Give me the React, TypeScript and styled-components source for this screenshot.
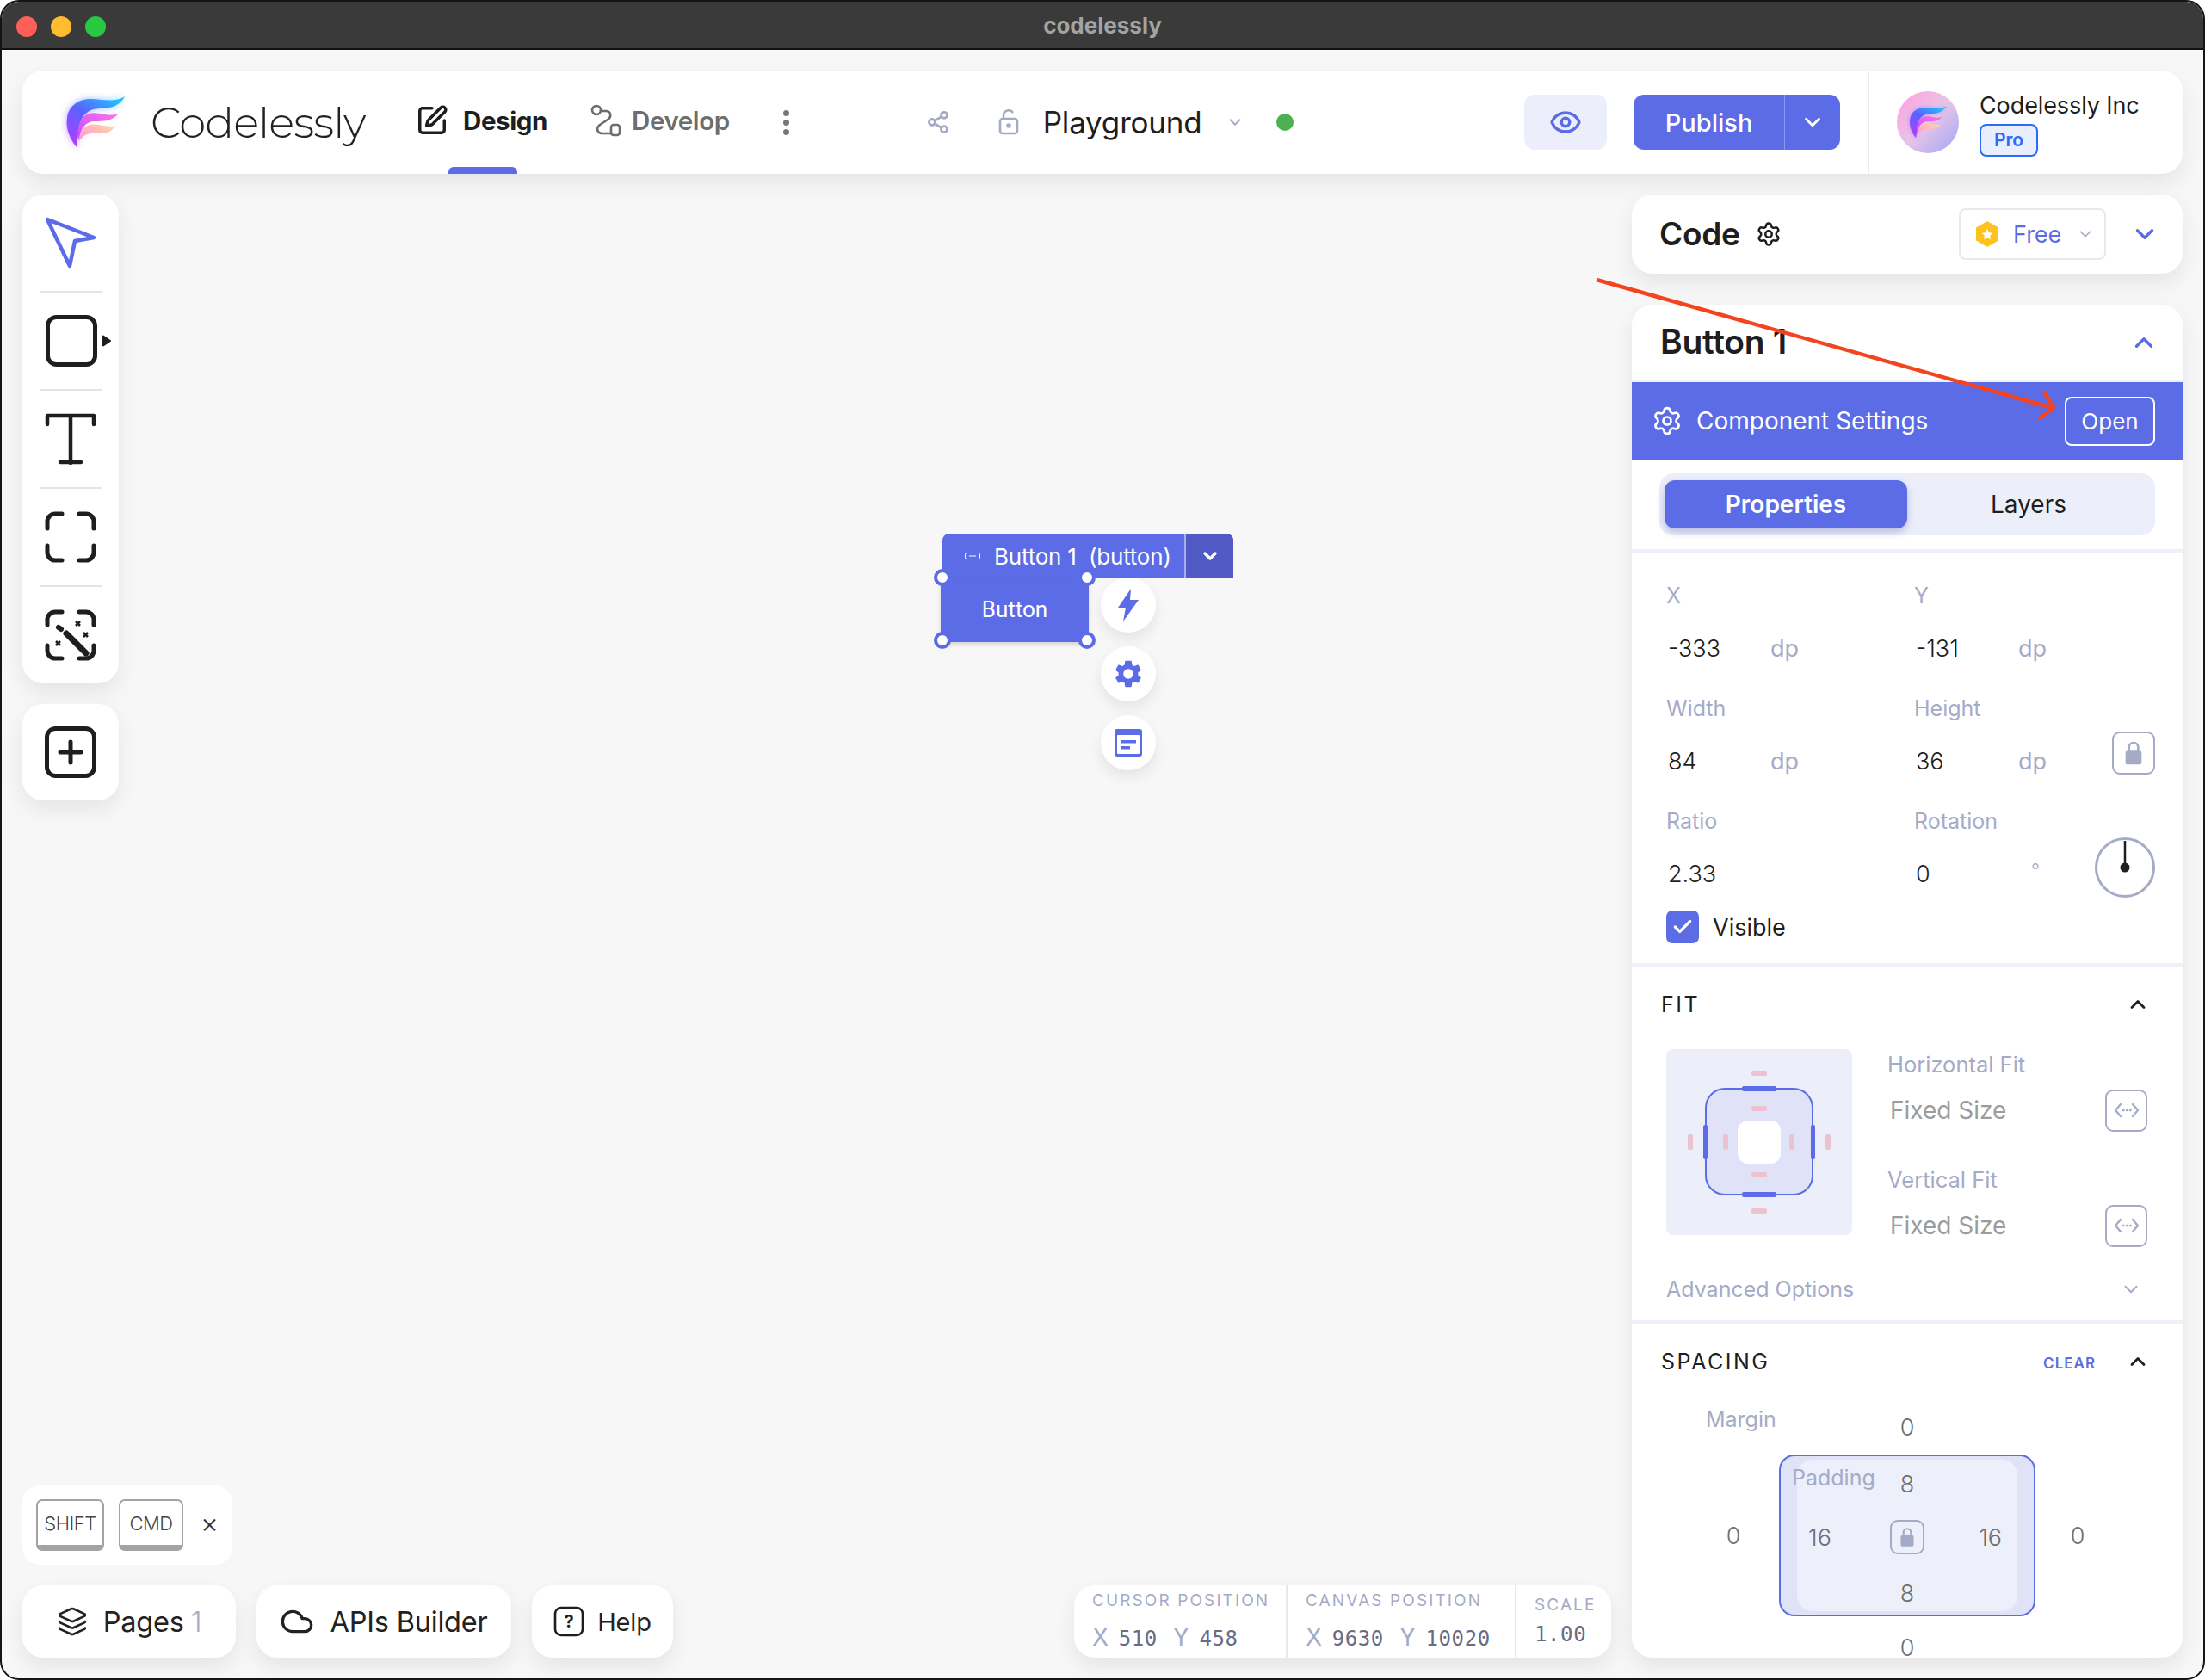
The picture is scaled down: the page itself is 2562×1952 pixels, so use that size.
import React from "react";
import styled, { createGlobalStyle } from "styled-components";
import { SquarePen, Share2, Eye, ChevronDown, ChevronUp, Settings, Layers, Cloud, Check } from "lucide-react";
import { MdSettings } from "react-icons/md";

const PRIMARY = "#5c6ce6";
const LABEL = "#a5abc7";
const INK = "#1e1e1e";
const SANS = `"Inter", "Noto Sans", sans-serif`;

const Global = createGlobalStyle`
  html, body { margin: 0; padding: 0; background: #fff; }
  body { font-family: ${SANS}; color: ${INK}; }
  * { box-sizing: border-box; }
`;

const Window = styled.div`
  position: relative;
  width: 2562px;
  height: 1952px;
  display: flex;
  flex-direction: column;
  border: 2px solid #151515;
  border-radius: 22px;
  overflow: hidden;
  background: #f7f7f7;
`;
const TitleBar = styled.div`
  height: 56px;
  flex: none;
  background: #3a3a3a;
  display: flex;
  align-items: center;
  justify-content: center;
  position: relative;
  border-bottom: 2px solid #111;
`;
const Lights = styled.div`
  position: absolute;
  left: 17px;
  top: 17px;
  display: flex;
  gap: 16px;
`;
const Light = styled.span<{ $c: string }>`
  width: 24px;
  height: 24px;
  border-radius: 50%;
  background: ${(p) => p.$c};
`;
const TitleText = styled.span`
  font-size: 26px;
  font-weight: 700;
  color: #a3a3a3;
`;
const Body = styled.div`
  flex: 1;
  min-height: 0;
  display: flex;
  flex-direction: column;
  gap: 24px;
  padding: 24px 24px 24px;
`;
const Card = styled.div`
  background: #fff;
  border-radius: 24px;
  box-shadow: 0 10px 24px rgba(0, 0, 0, 0.08);
`;
const Header = styled(Card)`
  height: 120px;
  flex: none;
  display: flex;
  align-items: center;
  position: relative;
`;
const LogoWrap = styled.div`
  margin-left: 50px;
  width: 70px;
  height: 62px;
  flex: none;
`;
const Brand = styled.div`
  margin-left: 29px;
  width: 308px;
  font-family: "Montserrat", "Inter", sans-serif;
  font-size: 50px;
  font-weight: 300;
  letter-spacing: -0.9px;
  color: #222;
`;
const NavItem = styled.div<{ $active?: boolean; $gap?: number; $iconGap: number }>`
  display: flex;
  align-items: center;
  gap: ${(p) => p.$iconGap}px;
  font-size: 29.5px;
  font-weight: ${(p) => (p.$active ? 700 : 600)};
  color: ${(p) => (p.$active ? "#1e1e1e" : "#6d6d6d")};
  margin-top: -4px;
  margin-left: ${(p) => p.$gap ?? 0}px;
  letter-spacing: -0.4px;
`;
const Underline = styled.div`
  position: absolute;
  left: 495px;
  bottom: 0;
  width: 80px;
  height: 8px;
  border-radius: 6px 6px 0 0;
  background: ${PRIMARY};
`;
const Dots = styled.div`
  display: flex;
  flex-direction: column;
  gap: 4px;
  margin-left: 62px;
  span {
    width: 7px;
    height: 7px;
    border-radius: 50%;
    background: #777;
  }
`;
const ProjectGroup = styled.div`
  display: flex;
  align-items: center;
  margin-left: 159px;
`;
const ProjectName = styled.div`
  font-size: 35px;
  font-weight: 400;
  margin-left: 28px;
  width: 182px;
  letter-spacing: -0.2px;
  color: #1e1e1e;
`;
const GreenDot = styled.span`
  width: 20px;
  height: 20px;
  background: #4caf50;
  border-radius: 50%;
  margin-left: 37px;
`;
const Actions = styled.div`
  margin-left: auto;
  display: flex;
  align-items: center;
  height: 100%;
`;
const EyeButton = styled.div`
  width: 96px;
  height: 64px;
  border-radius: 12px;
  background: #eceffb;
  display: flex;
  align-items: center;
  justify-content: center;
  color: ${PRIMARY};
`;
const PublishButton = styled.div`
  margin-left: 31px;
  width: 240px;
  height: 64px;
  border-radius: 12px;
  background: ${PRIMARY};
  color: #fff;
  display: flex;
  align-items: center;
  font-size: 29px;
  font-weight: 500;
`;
const PublishLabel = styled.div`
  width: 176px;
  text-align: center;
  border-right: 1px solid #8e99ee;
  height: 100%;
  line-height: 66px;
`;
const PublishCaret = styled.div`
  flex: 1;
  display: flex;
  justify-content: center;
`;
const UserBox = styled.div`
  margin-left: 32px;
  height: 100%;
  width: 366px;
  border-left: 2px solid #eeeeee;
  display: flex;
  align-items: center;
  padding-left: 32px;
  gap: 24px;
`;
const Avatar = styled.div`
  width: 72px;
  height: 72px;
  border-radius: 50%;
  background: linear-gradient(135deg, #ff9fe0 0%, #e8c4e8 50%, #9fa6f5 100%);
  display: flex;
  align-items: center;
  justify-content: center;
`;
const UserText = styled.div`
  display: flex;
  flex-direction: column;
  gap: 6px;
  margin-top: 5px;
`;
const UserName = styled.div`
  font-size: 27px;
  line-height: 30px;
  letter-spacing: -0.1px;
`;
const ProBadge = styled.div`
  width: 68px;
  height: 38px;
  border: 2px solid #2a6cf6;
  border-radius: 8px;
  background: #e8eefe;
  color: #2a6cf6;
  font-size: 21px;
  font-weight: 600;
  text-align: center;
  line-height: 34px;
`;

const Main = styled.div`
  flex: 1;
  min-height: 0;
  display: flex;
  gap: 24px;
`;
const CanvasArea = styled.div`
  flex: 1;
  position: relative;
  display: flex;
  flex-direction: column;
  justify-content: space-between;
`;
const ToolStack = styled.div`
  display: flex;
  flex-direction: column;
  gap: 24px;
  width: 112px;
`;
const ToolCard = styled(Card)`
  display: flex;
  flex-direction: column;
  align-items: center;
`;
const ToolItem = styled.div`
  height: 112px;
  width: 100%;
  display: flex;
  align-items: center;
  justify-content: center;
`;
const ToolSep = styled.div`
  width: 72px;
  height: 2px;
  background: #e4e4e4;
`;

const Node = styled.div`
  position: absolute;
  left: 1067px;
  top: 394px;
  width: 340px;
`;
const NodeBar = styled.div`
  margin-left: 2px;
  width: 338px;
  height: 52px;
  border-radius: 8px 8px 0 0;
  background: ${PRIMARY};
  color: #fff;
  display: flex;
  align-items: center;
  overflow: hidden;
`;
const NodeTitle = styled.div`
  flex: 1;
  display: flex;
  align-items: center;
  padding-left: 26px;
  font-size: 26px;
  gap: 16px;
  white-space: nowrap;
  letter-spacing: -0.2px;
`;
const NodeCaret = styled.div`
  width: 57px;
  height: 100%;
  background: #5059c4;
  border-left: 2px solid #a9aee8;
  display: flex;
  align-items: center;
  justify-content: center;
`;
const NodeButton = styled.div`
  margin-top: -2px;
  width: 172px;
  height: 76px;
  background: ${PRIMARY};
  color: #fff;
  font-size: 26px;
  font-weight: 400;
  font-family: "Roboto", sans-serif;
  display: flex;
  align-items: center;
  justify-content: center;
  box-shadow: 0 3px 5px rgba(0, 0, 0, 0.15);
`;
const Handle = styled.span<{ $x: number; $y: number }>`
  position: absolute;
  left: ${(p) => p.$x - 10}px;
  top: ${(p) => p.$y - 10}px;
  width: 20px;
  height: 20px;
  border-radius: 50%;
  background: #fff;
  border: 4px solid ${PRIMARY};
`;
const FloatColumn = styled.div`
  position: absolute;
  left: 186px;
  top: 51px;
  display: flex;
  flex-direction: column;
  gap: 16px;
`;
const FloatButton = styled.div`
  width: 64px;
  height: 64px;
  border-radius: 50%;
  background: #fff;
  display: flex;
  align-items: center;
  justify-content: center;
  box-shadow: 0 8px 16px rgba(0, 0, 0, 0.08);
  color: ${PRIMARY};
`;

const BottomRow = styled.div`
  display: flex;
  justify-content: space-between;
  align-items: flex-end;
`;
const BottomLeft = styled.div`
  display: flex;
  flex-direction: column;
  gap: 24px;
  align-items: flex-start;
`;
const ShortcutCard = styled(Card)`
  width: 244px;
  height: 92px;
  border-radius: 20px;
  display: flex;
  align-items: center;
  padding-left: 16px;
  gap: 17px;
  box-shadow: none;
`;
const Key = styled.div<{ $w: number }>`
  width: ${(p) => p.$w}px;
  height: 60px;
  border: 2px solid #a3a3a3;
  border-bottom: 7px solid #a3a3a3;
  border-radius: 7px;
  font-size: 22px;
  font-weight: 300;
  color: #444;
  display: flex;
  align-items: center;
  justify-content: center;
  letter-spacing: -0.5px;
`;
const CloseX = styled.span`
  font-size: 32px;
  color: #333;
  margin: -5px 0 0 3px;
  font-weight: 300;
`;
const PillRow = styled.div`
  display: flex;
  gap: 24px;
`;
const Pill = styled(Card)<{ $w: number }>`
  width: ${(p) => p.$w}px;
  height: 84px;
  display: flex;
  align-items: center;
  justify-content: center;
  gap: 18px;
  font-size: 32.5px;
  letter-spacing: -0.2px;
  color: #222;
`;
const PillCount = styled.span`
  color: ${LABEL};
  font-weight: 300;
  margin-left: 8px;
`;
const HelpText = styled.span`
  font-size: 29px;
  margin-left: -3px;
`;
const StatusCard = styled(Card)`
  display: flex;
  height: 84px;
`;
const StatusCell = styled.div<{ $w: number; $last?: boolean }>`
  width: ${(p) => p.$w}px;
  padding: 7px 0 0 21px;
  border-right: ${(p) => (p.$last ? "none" : "2px solid #e8e8e8")};
  display: flex;
  flex-direction: column;
`;
const StatusTitle = styled.div<{ $low?: boolean }>`
  font-size: 19px;
  line-height: 22px;
  letter-spacing: 2.1px;
  color: ${LABEL};
  white-space: nowrap;
  margin-top: ${(p) => (p.$low ? "5px" : "0")};
`;
const StatusValues = styled.div<{ $low?: boolean }>`
  margin-top: ${(p) => (p.$low ? "9px" : "14px")};
  display: flex;
  align-items: baseline;
  font-family: "DejaVu Sans Mono", monospace;
  font-size: 24px;
  letter-spacing: 0.6px;
  color: #686d85;
  white-space: nowrap;
`;
const Axis = styled.span`
  font-family: ${SANS};
  font-size: 28px;
  color: ${LABEL};
  margin: 0 11px 0 0;
`;
const AxisGap = styled.span`
  width: 18px;
`;

const RightCol = styled.div`
  width: 640px;
  flex: none;
  display: flex;
  flex-direction: column;
  gap: 36px;
`;
const CodeCard = styled(Card)`
  height: 92px;
  flex: none;
  display: flex;
  align-items: center;
  padding: 0 27px 0 32px;
`;
const CodeTitle = styled.div`
  font-size: 37px;
  font-weight: 600;
  margin: -2px 18px 0 0;
  letter-spacing: -0.3px;
`;
const FreeSelect = styled.div`
  margin-left: auto;
  width: 171px;
  height: 60px;
  border: 2px solid #e8e9f0;
  border-radius: 8px;
  display: flex;
  align-items: center;
  padding-left: 18px;
  gap: 17px;
  color: ${PRIMARY};
  font-size: 27px;
`;
const FreeCaret = styled.div`
  margin-left: 28px;
  display: flex;
  color: ${PRIMARY};
`;
const Panel = styled(Card)`
  flex: 1;
  min-height: 0;
  overflow: hidden;
  display: flex;
  flex-direction: column;
`;
const PanelHead = styled.div`
  height: 90px;
  flex: none;
  display: flex;
  align-items: center;
  justify-content: space-between;
  padding: 0 28px 0 33px;
  border-bottom: 2px solid #eef0fa;
  color: ${PRIMARY};
`;
const PanelTitle = styled.div`
  font-size: 39px;
  font-weight: 600;
  color: ${INK};
  letter-spacing: -0.3px;
  margin-top: -3px;
`;
const SettingsBand = styled.div`
  height: 90px;
  flex: none;
  background: ${PRIMARY};
  color: #fff;
  display: flex;
  align-items: center;
  padding: 0 32px 0 23px;
  font-size: 28px;
  gap: 16px;
`;
const OpenButton = styled.div`
  margin-left: auto;
  width: 105px;
  height: 57px;
  border: 2px solid #fff;
  border-radius: 8px;
  font-size: 26px;
  display: flex;
  align-items: center;
  justify-content: center;
`;
const TabsWrap = styled.div`
  flex: none;
  padding: 16px 32px;
  border-bottom: 4px solid #eef0fa;
`;
const Tabs = styled.div`
  height: 72px;
  border-radius: 16px;
  background: #eceffa;
  padding: 8px 6px;
  display: flex;
`;
const Tab = styled.div<{ $active?: boolean }>`
  flex: 1;
  display: flex;
  align-items: center;
  justify-content: center;
  font-size: 28px;
  font-weight: ${(p) => (p.$active ? 600 : 400)};
  border-radius: 12px;
  color: ${(p) => (p.$active ? "#fff" : INK)};
  background: ${(p) => (p.$active ? PRIMARY : "transparent")};
  box-shadow: ${(p) => (p.$active ? "0 4px 10px rgba(60,70,160,.3)" : "none")};
`;
const Props = styled.div`
  flex: none;
  padding: 35px 32px 23px 40px;
  border-bottom: 4px solid #eef0fa;
`;
const PropGrid = styled.div`
  display: grid;
  grid-template-columns: 288px 1fr;
  row-gap: 37px;
`;
const Field = styled.div`
  display: flex;
  align-items: flex-end;
  justify-content: space-between;
`;
const FieldLabel = styled.div`
  font-size: 25px;
  line-height: 30px;
  color: ${LABEL};
`;
const FieldValueRow = styled.div`
  margin-top: 28px;
  display: flex;
  align-items: center;
  height: 36px;
  font-size: 27px;
  font-weight: 300;
  color: ${INK};
  padding-left: 2px;
`;
const FieldValue = styled.span`
  width: 119px;
`;
const Unit = styled.span`
  color: ${LABEL};
  font-size: 27px;
  font-weight: 400;
`;
const Degree = styled.span`
  color: ${LABEL};
  font-size: 22px;
  margin-top: -8px;
  margin-left: 15px;
`;
const IconBox = styled.div<{ $w: number; $h: number }>`
  width: ${(p) => p.$w}px;
  height: ${(p) => p.$h}px;
  flex: none;
  border: 2px solid ${LABEL};
  border-radius: 9px;
  display: flex;
  align-items: center;
  justify-content: center;
  color: ${LABEL};
`;
const LockAdorn = styled(IconBox)`
  margin-bottom: 2px;
`;
const Dial = styled.div`
  margin-bottom: -10px;
  display: flex;
`;
const VisibleRow = styled.div`
  margin-top: 25px;
  display: flex;
  align-items: center;
  gap: 16px;
  font-size: 27px;
`;
const CheckBox = styled.div`
  width: 38px;
  height: 38px;
  border-radius: 7px;
  background: ${PRIMARY};
  color: #fff;
  display: flex;
  align-items: center;
  justify-content: center;
`;
const Section = styled.div`
  flex: none;
  padding: 29px 33px 0 34px;
`;
const FitSection = styled(Section)`
  height: 415px;
  border-bottom: 4px solid #eef0fa;
`;
const SectionHead = styled.div`
  height: 30px;
  display: flex;
  align-items: center;
  font-size: 25px;
  letter-spacing: 2.5px;
  color: ${INK};
`;
const SectionCaret = styled.div<{ $auto?: boolean }>`
  margin-left: ${(p) => (p.$auto ? "auto" : "35px")};
  display: flex;
  color: ${INK};
  margin-right: 5px;
`;
const ClearLink = styled.span`
  margin-left: auto;
  font-size: 17px;
  font-weight: 600;
  letter-spacing: 1px;
  color: ${PRIMARY};
  margin-top: 3px;
`;
const FitRow = styled.div`
  margin: 37px 0 0 6px;
  display: flex;
`;
const FitDiagram = styled.div`
  width: 216px;
  height: 216px;
  flex: none;
  border-radius: 8px;
  background: #eceffa;
`;
const FitOptions = styled.div`
  margin-left: 41px;
  flex: 1;
  padding-top: 4px;
`;
const FitLabel = styled.div`
  font-size: 25.5px;
  line-height: 28px;
  color: ${LABEL};
`;
const FitOption = styled.div`
  height: 50px;
  margin: 14px 0 42px 3px;
  display: flex;
  align-items: center;
  justify-content: space-between;
  font-size: 28px;
  color: #9c9c9c;
  padding-right: 8px;
  &:last-child {
    margin-bottom: 0;
  }
`;
const AdvancedRow = styled.div`
  margin: 34px 0 0 6px;
  display: flex;
  align-items: center;
  justify-content: space-between;
  font-size: 25px;
  line-height: 30px;
  color: ${LABEL};
  padding-right: 14px;
`;
const SpacingGrid = styled.div`
  margin: 43px -33px 0 -34px;
  display: grid;
  grid-template-columns: 128px 298px 128px;
  grid-template-rows: 36px 188px 36px;
  row-gap: 14px;
  justify-content: center;
  font-size: 27px;
  font-weight: 300;
  color: #6f6f6f;
`;
const MarginLabel = styled.div`
  font-size: 25px;
  font-weight: 400;
  color: ${LABEL};
  padding-left: 43px;
  line-height: 18px;
`;
const SpaceCell = styled.div<{ $pl?: number; $pr?: number; $pt?: number }>`
  display: flex;
  align-items: center;
  justify-content: center;
  padding-left: ${(p) => p.$pl ?? 0}px;
  padding-right: ${(p) => p.$pr ?? 0}px;
  padding-top: ${(p) => p.$pt ?? 0}px;
`;
const EdgeStart = styled(SpaceCell)`
  justify-content: flex-start;
`;
const EdgeEnd = styled(SpaceCell)`
  justify-content: flex-end;
`;
const PaddingOuter = styled.div`
  border: 2px solid ${PRIMARY};
  border-radius: 18px;
  background: #e0e3f8;
  padding: 4px 19px;
  position: relative;
`;
const PaddingInner = styled.div`
  height: 100%;
  border-radius: 18px;
  background: #edf0fb;
  display: grid;
  grid-template-columns: 1fr 40px 1fr;
  grid-template-rows: 56px 68px 1fr;
`;
const PaddingLabel = styled.div`
  position: absolute;
  left: 13px;
  top: 10px;
  font-size: 25px;
  font-weight: 400;
  color: ${LABEL};
`;
const Arrow = styled.svg`
  position: absolute;
  left: 0;
  top: 0;
  pointer-events: none;
`;

const Logo = ({ id, w, h }: { id: string; w: number; h: number }) => (
  <svg width={w} height={h} viewBox="0 0 70 62" overflow="visible">
    <defs>
      <linearGradient id={`${id}a`} x1="0.8" y1="0" x2="0.1" y2="1">
        <stop offset="0" stopColor="#22c1ff" />
        <stop offset="0.45" stopColor="#5b62ff" />
        <stop offset="1" stopColor="#b23cff" />
      </linearGradient>
      <linearGradient id={`${id}b`} x1="1" y1="0" x2="0" y2="1">
        <stop offset="0" stopColor="#ff74e6" />
        <stop offset="1" stopColor="#c44dff" />
      </linearGradient>
      <linearGradient id={`${id}c`} x1="1" y1="0" x2="0" y2="1">
        <stop offset="0" stopColor="#ffdca0" />
        <stop offset="1" stopColor="#ff8fd8" />
      </linearGradient>
      <filter id={`${id}f`} x="-30%" y="-30%" width="160%" height="160%">
        <feGaussianBlur stdDeviation="4" />
      </filter>
    </defs>
    <path d="M69 1C64 12 52 15 40 15C26 15 18 24 16 36C15 46 14 52 13 60C5 50 0 38 2 26C4 10 18 3 32 4C46 5 58 8 69 1Z" fill={`url(#${id}a)`} filter={`url(#${id}f)`} opacity="0.55" />
    <path d="M69 1C64 12 52 15 40 15C26 15 18 24 16 36C15 46 14 52 13 60C5 50 0 38 2 26C4 10 18 3 32 4C46 5 58 8 69 1Z" fill={`url(#${id}a)`} />
    <path d="M62 20C56 30 44 30 34 30C24 30 17 38 16 52C13 44 14 34 20 26C26 18 38 20 46 22C52 23 58 23 62 20Z" fill={`url(#${id}b)`} />
    <path d="M58 35C52 46 42 44 32 44C26 44 20 46 16 53C16 44 20 36 28 34C38 32 50 38 58 35Z" fill={`url(#${id}c)`} />
  </svg>
);

const LockGlyph = ({ s }: { s: number }) => (
  <svg width={s} height={s} viewBox="0 0 24 24" fill="currentColor">
    <path d="M5 12a2 2 0 0 1 2-2h10a2 2 0 0 1 2 2v8a2 2 0 0 1-2 2H7a2 2 0 0 1-2-2z" />
    <path d="M8 11V7a4 4 0 0 1 8 0v4" fill="none" stroke="currentColor" strokeWidth="2" />
  </svg>
);

const DevelopIcon = () => (
  <svg width="36" height="38" viewBox="0 0 36 38" fill="none" stroke="#6d6d6d" strokeWidth="2.6" strokeLinecap="round">
    <circle cx="7" cy="7" r="5" />
    <rect x="24" y="24" width="10" height="12" rx="3" />
    <path d="M12 8H18C24 8 25 15 20 18L11 24C6 28 8 34 14 34H24" />
  </svg>
);

const FitArrows = () => (
  <svg width="30" height="18" viewBox="0 0 30 18" fill="none" stroke={LABEL} strokeWidth="2.4" strokeLinecap="round" strokeLinejoin="round">
    <path d="M8 2L2 9l6 7M22 2l6 7-6 7" />
    <path d="M11 9h.6M15 9h.6M19 9h.6" />
  </svg>
);

const Cursor = () => (
  <svg width="60" height="60" viewBox="0 0 60 60" fill="none" stroke={PRIMARY} strokeWidth="4.5" strokeLinejoin="round" strokeLinecap="round">
    <path d="M3 3L57 24L35 28L29 57Z" />
  </svg>
);
const RectTool = () => (
  <svg width="76" height="60" viewBox="0 0 76 60" fill="none" style={{ marginLeft: 18 }}>
    <rect x="2.5" y="2.5" width="55" height="55" rx="10" stroke="#1e1e1e" strokeWidth="5" />
    <path d="M67 24.5l8 5.5-8 5.5z" fill="#1e1e1e" stroke="#1e1e1e" strokeWidth="2" strokeLinejoin="round" />
  </svg>
);
const TextTool = () => (
  <svg width="60" height="60" viewBox="0 0 60 60" fill="none" stroke="#1e1e1e" strokeWidth="4.5" strokeLinecap="round" strokeLinejoin="round">
    <path d="M3 13V3h54v10M30 3v55M18 57h24" />
  </svg>
);
const FrameTool = () => (
  <svg width="60" height="60" viewBox="0 0 60 60" fill="none" stroke="#1e1e1e" strokeWidth="5" strokeLinecap="round">
    <path d="M20 3H12a9 9 0 0 0-9 9v8M40 3h8a9 9 0 0 1 9 9v8M20 57H12a9 9 0 0 1-9-9v-8M40 57h8a9 9 0 0 0 9-9v-8" />
  </svg>
);
const WandTool = () => (
  <svg width="60" height="60" viewBox="0 0 60 60" fill="none" stroke="#1e1e1e" strokeWidth="5" strokeLinecap="round">
    <path d="M20 3H12a9 9 0 0 0-9 9v6M40 3h8a9 9 0 0 1 9 9v6M20 57H12a9 9 0 0 1-9-9v-6M40 57h8a9 9 0 0 0 9-9v-6" />
    <path d="M16 21l3 2" strokeWidth="6" />
    <path d="M25 28L48 51" strokeWidth="7" />
    <path d="M36 14l5 5M41 14l-5 5M45 27l5 5M50 27l-5 5M13 37l5 5M18 37l-5 5" strokeWidth="2.6" strokeLinecap="butt" />
  </svg>
);
const AddTool = () => (
  <svg width="60" height="60" viewBox="0 0 60 60" fill="none" stroke="#1e1e1e" strokeWidth="5" strokeLinecap="round">
    <rect x="2.5" y="2.5" width="55" height="55" rx="10" />
    <path d="M30 18v24M18 30h24" />
  </svg>
);

const FitPicture = () => {
  const pink = "#ecc2cf";
  const ticks: [number, number, number, number][] = [
    [99, 25, 18, 6], [99, 66, 18, 6], [99, 143, 18, 6], [99, 185, 18, 6],
    [25, 99, 6, 18], [66, 99, 6, 18], [143, 99, 6, 18], [185, 99, 6, 18],
  ];
  return (
    <svg width="216" height="216" viewBox="0 0 216 216">
      <rect x="46" y="46" width="124" height="123" rx="22" fill="#e0e3f7" stroke={PRIMARY} strokeWidth="2" />
      <rect x="83" y="83" width="50" height="50" rx="12" fill="#fff" />
      {ticks.map(([x, y, w, h], i) => (
        <rect key={i} x={x} y={y} width={w} height={h} rx="2" fill={pink} />
      ))}
      <rect x="88" y="43" width="40" height="6" rx="2" fill={PRIMARY} />
      <rect x="88" y="166" width="40" height="6" rx="2" fill={PRIMARY} />
      <rect x="43" y="88" width="5" height="40" rx="2" fill={PRIMARY} />
      <rect x="168" y="88" width="5" height="40" rx="2" fill={PRIMARY} />
    </svg>
  );
};

export default function App() {
  return (
    <>
      <Global />
      <Window>
        <TitleBar>
          <Lights>
            <Light $c="#ff5f57" />
            <Light $c="#febc2e" />
            <Light $c="#28c840" />
          </Lights>
          <TitleText>codelessly</TitleText>
        </TitleBar>
        <Body>
          <Header>
            <LogoWrap>
              <Logo id="lg" w={70} h={62} />
            </LogoWrap>
            <Brand>Codelessly</Brand>
            <NavItem $active $iconGap={17}>
              <SquarePen size={38} strokeWidth={2.2} color="#1e1e1e" />
              Design
            </NavItem>
            <NavItem $gap={50} $iconGap={12}>
              <DevelopIcon />
              Develop
            </NavItem>
            <Dots>
              <span />
              <span />
              <span />
            </Dots>
            <Underline />
            <ProjectGroup>
              <Share2 size={28} color={LABEL} strokeWidth={2.4} />
              <svg width="24" height="30" viewBox="0 0 24 30" fill="none" stroke={LABEL} strokeWidth="2.6" style={{ marginLeft: 56 }}>
                <rect x="2" y="11" width="20" height="17" rx="3" />
                <path d="M6 11V7a6 6 0 0 1 11-3" />
                <circle cx="12" cy="19" r="1.5" fill={LABEL} />
              </svg>
              <ProjectName>Playground</ProjectName>
              <ChevronDown size={22} color={LABEL} style={{ marginLeft: 30 }} />
              <GreenDot />
            </ProjectGroup>
            <Actions>
              <EyeButton>
                <Eye size={38} strokeWidth={2.2} />
              </EyeButton>
              <PublishButton>
                <PublishLabel>Publish</PublishLabel>
                <PublishCaret>
                  <ChevronDown size={30} strokeWidth={2.2} />
                </PublishCaret>
              </PublishButton>
              <UserBox>
                <Avatar>
                  <Logo id="av" w={44} h={42} />
                </Avatar>
                <UserText>
                  <UserName>Codelessly Inc</UserName>
                  <ProBadge>Pro</ProBadge>
                </UserText>
              </UserBox>
            </Actions>
          </Header>
          <Main>
            <CanvasArea>
              <ToolStack>
                <ToolCard>
                  <ToolItem><Cursor /></ToolItem>
                  <ToolSep />
                  <ToolItem><RectTool /></ToolItem>
                  <ToolSep />
                  <ToolItem><TextTool /></ToolItem>
                  <ToolSep />
                  <ToolItem><FrameTool /></ToolItem>
                  <ToolSep />
                  <ToolItem><WandTool /></ToolItem>
                </ToolCard>
                <ToolCard>
                  <ToolItem><AddTool /></ToolItem>
                </ToolCard>
              </ToolStack>

              <Node>
                <NodeBar>
                  <NodeTitle>
                    <svg width="18" height="8" viewBox="0 0 18 8" fill="none" stroke="#fff" strokeWidth="1">
                      <rect x="0.5" y="0.5" width="17" height="7" rx="2" />
                      <path d="M5 4h8" />
                    </svg>
                    <span>Button 1&nbsp; (button)</span>
                  </NodeTitle>
                  <NodeCaret>
                    <ChevronDown size={24} strokeWidth={3.4} color="#fff" />
                  </NodeCaret>
                </NodeBar>
                <NodeButton>Button</NodeButton>
                <Handle $x={2} $y={51} />
                <Handle $x={170} $y={51} />
                <Handle $x={2} $y={124} />
                <Handle $x={170} $y={124} />
                <FloatColumn>
                  <FloatButton>
                    <svg width="26" height="38" viewBox="0 0 26 38" fill={PRIMARY}>
                      <path d="M16 0L1 22h9L7 38l18-25H15z" />
                    </svg>
                  </FloatButton>
                  <FloatButton>
                    <MdSettings size={38} />
                  </FloatButton>
                  <FloatButton>
                    <svg width="32" height="32" viewBox="0 0 32 32">
                      <rect width="32" height="32" rx="3" fill={PRIMARY} />
                      <rect x="3" y="7" width="26" height="22" rx="1" fill="#fff" />
                      <rect x="7" y="13" width="18" height="3.5" fill={PRIMARY} />
                      <rect x="7" y="20" width="11" height="3.5" fill={PRIMARY} />
                    </svg>
                  </FloatButton>
                </FloatColumn>
              </Node>

              <BottomRow>
                <BottomLeft>
                  <ShortcutCard>
                    <Key $w={79}>SHIFT</Key>
                    <Key $w={75}>CMD</Key>
                    <CloseX>×</CloseX>
                  </ShortcutCard>
                  <PillRow>
                    <Pill $w={248}>
                      <Layers size={36} strokeWidth={1.7} />
                      <span>Pages<PillCount>1</PillCount></span>
                    </Pill>
                    <Pill $w={296}>
                      <Cloud size={40} strokeWidth={2} />
                      APIs Builder
                    </Pill>
                    <Pill $w={164}>
                      <svg width="36" height="36" viewBox="0 0 36 36" fill="none" stroke="#1e1e1e" strokeWidth="2.6">
                        <rect x="2" y="2" width="32" height="32" rx="7" />
                        <text x="18" y="25" textAnchor="middle" fontSize="20" fontWeight="700" fill="#1e1e1e" stroke="none" fontFamily="Inter, sans-serif">?</text>
                      </svg>
                      <HelpText>Help</HelpText>
                    </Pill>
                  </PillRow>
                </BottomLeft>
                <StatusCard>
                  <StatusCell $w={248}>
                    <StatusTitle>CURSOR POSITION</StatusTitle>
                    <StatusValues>
                      <Axis>X</Axis>510<AxisGap /><Axis>Y</Axis>458
                    </StatusValues>
                  </StatusCell>
                  <StatusCell $w={266}>
                    <StatusTitle>CANVAS POSITION</StatusTitle>
                    <StatusValues>
                      <Axis>X</Axis>9630<AxisGap /><Axis>Y</Axis>10020
                    </StatusValues>
                  </StatusCell>
                  <StatusCell $w={110} $last>
                    <StatusTitle $low>SCALE</StatusTitle>
                    <StatusValues $low>1.00</StatusValues>
                  </StatusCell>
                </StatusCard>
              </BottomRow>
            </CanvasArea>

            <RightCol>
              <CodeCard>
                <CodeTitle>Code</CodeTitle>
                <Settings size={30} strokeWidth={2} />
                <FreeSelect>
                  <svg width="26" height="30" viewBox="0 0 26 30">
                    <path d="M13 0l13 7.5v15L13 30 0 22.5v-15z" fill="#fdc31d" />
                    <path d="M13 9l2 4.2 4.5.6-3.3 3 .9 4.5-4.1-2.3-4.1 2.3.9-4.5-3.3-3 4.5-.6z" fill="#fff" />
                  </svg>
                  <span>Free</span>
                  <ChevronDown size={22} strokeWidth={1.8} color={LABEL} />
                </FreeSelect>
                <FreeCaret>
                  <ChevronDown size={34} strokeWidth={2.4} />
                </FreeCaret>
              </CodeCard>

              <Panel>
                <PanelHead>
                  <PanelTitle>Button 1</PanelTitle>
                  <ChevronUp size={34} strokeWidth={2.4} />
                </PanelHead>
                <SettingsBand>
                  <Settings size={36} strokeWidth={1.8} />
                  <span>Component Settings</span>
                  <OpenButton>Open</OpenButton>
                </SettingsBand>
                <TabsWrap>
                  <Tabs>
                    <Tab $active>Properties</Tab>
                    <Tab>Layers</Tab>
                  </Tabs>
                </TabsWrap>
                <Props>
                  <PropGrid>
                    <Field>
                      <div>
                        <FieldLabel>X</FieldLabel>
                        <FieldValueRow><FieldValue>-333</FieldValue><Unit>dp</Unit></FieldValueRow>
                      </div>
                    </Field>
                    <Field>
                      <div>
                        <FieldLabel>Y</FieldLabel>
                        <FieldValueRow><FieldValue>-131</FieldValue><Unit>dp</Unit></FieldValueRow>
                      </div>
                    </Field>
                    <Field>
                      <div>
                        <FieldLabel>Width</FieldLabel>
                        <FieldValueRow><FieldValue>84</FieldValue><Unit>dp</Unit></FieldValueRow>
                      </div>
                    </Field>
                    <Field>
                      <div>
                        <FieldLabel>Height</FieldLabel>
                        <FieldValueRow><FieldValue>36</FieldValue><Unit>dp</Unit></FieldValueRow>
                      </div>
                      <LockAdorn $w={50} $h={50}><LockGlyph s={32} /></LockAdorn>
                    </Field>
                    <Field>
                      <div>
                        <FieldLabel>Ratio</FieldLabel>
                        <FieldValueRow><FieldValue>2.33</FieldValue></FieldValueRow>
                      </div>
                    </Field>
                    <Field>
                      <div>
                        <FieldLabel>Rotation</FieldLabel>
                        <FieldValueRow><FieldValue>0</FieldValue><Degree>°</Degree></FieldValueRow>
                      </div>
                      <Dial>
                        <svg width="70" height="70" viewBox="0 0 70 70" fill="none">
                          <circle cx="35" cy="35" r="33.5" stroke={LABEL} strokeWidth="3" />
                          <path d="M35 4v31" stroke="#1e1e1e" strokeWidth="2.5" />
                          <circle cx="35" cy="35" r="5.5" fill="#1e1e1e" />
                        </svg>
                      </Dial>
                    </Field>
                  </PropGrid>
                  <VisibleRow>
                    <CheckBox><Check size={26} strokeWidth={3} /></CheckBox>
                    Visible
                  </VisibleRow>
                </Props>

                <FitSection>
                  <SectionHead>
                    FIT
                    <SectionCaret $auto><ChevronUp size={28} strokeWidth={2.4} /></SectionCaret>
                  </SectionHead>
                  <FitRow>
                    <FitDiagram><FitPicture /></FitDiagram>
                    <FitOptions>
                      <FitLabel>Horizontal Fit</FitLabel>
                      <FitOption>Fixed Size<IconBox $w={49} $h={49}><FitArrows /></IconBox></FitOption>
                      <FitLabel>Vertical Fit</FitLabel>
                      <FitOption>Fixed Size<IconBox $w={49} $h={49}><FitArrows /></IconBox></FitOption>
                    </FitOptions>
                  </FitRow>
                  <AdvancedRow>
                    Advanced Options
                    <ChevronDown size={26} strokeWidth={1.8} color={LABEL} />
                  </AdvancedRow>
                </FitSection>

                <Section>
                  <SectionHead>
                    SPACING
                    <ClearLink>CLEAR</ClearLink>
                    <SectionCaret><ChevronUp size={28} strokeWidth={2.4} /></SectionCaret>
                  </SectionHead>
                  <SpacingGrid>
                    <MarginLabel>Margin</MarginLabel>
                    <SpaceCell>0</SpaceCell>
                    <SpaceCell />
                    <SpaceCell $pl={22}>0</SpaceCell>
                    <PaddingOuter>
                      <PaddingLabel>Padding</PaddingLabel>
                      <PaddingInner>
                        <SpaceCell />
                        <SpaceCell>8</SpaceCell>
                        <SpaceCell />
                        <EdgeStart $pl={13}>16</EdgeStart>
                        <SpaceCell>
                          <IconBox $w={40} $h={40}><LockGlyph s={26} /></IconBox>
                        </SpaceCell>
                        <EdgeEnd $pr={18}>16</EdgeEnd>
                        <SpaceCell />
                        <SpaceCell $pt={10}>8</SpaceCell>
                        <SpaceCell />
                      </PaddingInner>
                    </PaddingOuter>
                    <SpaceCell $pr={30}>0</SpaceCell>
                    <SpaceCell />
                    <SpaceCell $pt={8}>0</SpaceCell>
                    <SpaceCell />
                  </SpacingGrid>
                </Section>
              </Panel>
            </RightCol>
          </Main>
        </Body>
        <Arrow width="2562" height="1952" viewBox="0 0 2562 1952" fill="none" stroke="#f4441f" strokeWidth="4.5">
          <path d="M1853 323L2383 472M2373 453L2384 472L2366 485" />
        </Arrow>
      </Window>
    </>
  );
}
